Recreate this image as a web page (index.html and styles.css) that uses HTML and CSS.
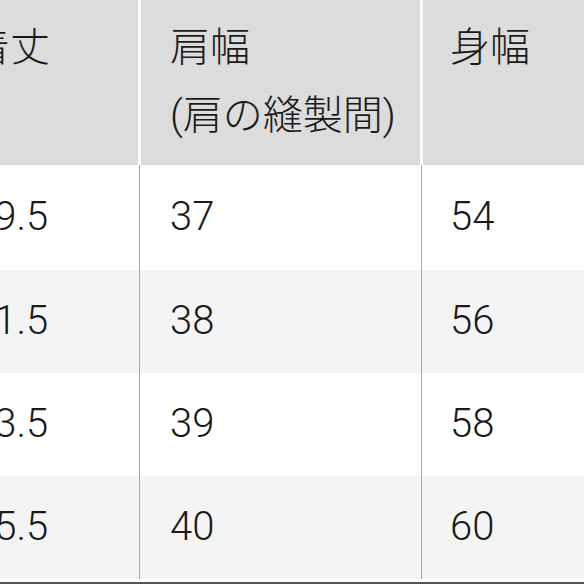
FILE: index.html
```html
<!DOCTYPE html>
<html lang="ja">
<head>
<meta charset="utf-8">
<link rel="stylesheet" href="styles.css">
</head>
<body>
<div class="table">
  <div class="head">
    <div class="hcell c1">着丈</div>
    <div class="hcell c2">肩幅<br>(肩の縫製間)</div>
    <div class="hcell c3">身幅</div>
  </div>
  <div class="row r1">
    <div class="cell c1">69.5</div>
    <div class="cell c2">37</div>
    <div class="cell c3">54</div>
  </div>
  <div class="row r2 alt">
    <div class="cell c1">71.5</div>
    <div class="cell c2">38</div>
    <div class="cell c3">56</div>
  </div>
  <div class="row r3">
    <div class="cell c1">73.5</div>
    <div class="cell c2">39</div>
    <div class="cell c3">58</div>
  </div>
  <div class="row r4 alt">
    <div class="cell c1">75.5</div>
    <div class="cell c2">40</div>
    <div class="cell c3">60</div>
  </div>
  <div class="foot"></div>
</div>
</body>
</html>
```
FILE: styles.css
```css
html, body {
  margin: 0;
  padding: 0;
  background: #ffffff;
  overflow: hidden;
  width: 584px;
  height: 584px;
}
.table {
  margin-left: -60px;
  width: 760px;
  font-family: Roboto, "Noto Sans CJK JP", sans-serif;
  font-weight: 300;
  font-size: 40px;
  color: #1a1a1a;
}
.head {
  display: flex;
  gap: 3px;
  height: 165px;
}
.hcell {
  background: #dcdcdc;
  box-sizing: border-box;
  padding-top: 14px;
  line-height: 68px;
}
.hcell.c1 { width: 198px; padding-left: 30px; }
.hcell.c2 { width: 279px; padding-left: 29px; }
.hcell.c3 { flex: 1; padding-left: 27px; }
.row {
  display: flex;
  height: 103px;
  align-items: stretch;
}
.row.r1 { height: 105px; }
.row.alt { background: #f4f4f4; }
.cell {
  box-sizing: border-box;
  display: flex;
  align-items: center;
  padding-bottom: 2px;
}
.cell.c1 { width: 199px; padding-left: 32px; }
.cell.c2 { width: 282px; padding-left: 30px; border-left: 1px solid #a8a8a8; }
.cell.c3 { flex: 1; padding-left: 28px; border-left: 1px solid #a8a8a8; }
.foot {
  height: 3px;
  border-bottom: 2px solid #555555;
}
```
